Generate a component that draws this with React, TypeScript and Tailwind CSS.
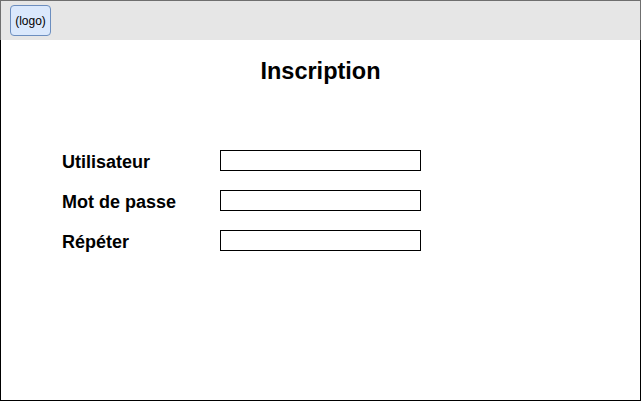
import React from "react";

export default function App() {
  const rows = ["Utilisateur", "Mot de passe", "Répéter"];
  return (
    <div
      className="w-[641px] h-[401px] flex flex-col bg-white"
      style={{ fontFamily: '"Liberation Sans", Arial, sans-serif' }}
    >
      <div className="h-[40px] shrink-0 bg-[#e6e6e6] border-t border-x border-[#6f6f6f] flex items-center pl-[9px]">
        <div className="w-[41px] h-[31px] bg-[#dae8fc] border border-[#6c8ebf] rounded-[4px] flex items-center justify-center text-[12px] text-black">
          (logo)
        </div>
      </div>
      <div className="flex-1 border-x border-b border-black flex flex-col">
        <div className="pt-[16px] h-[60px] text-center text-[23.5px] font-bold leading-[30px] text-black">
          Inscription
        </div>
        <div className="mt-[40px] flex flex-col pl-[61px]">
          {rows.map((r) => (
            <div key={r} className="h-[40px] flex items-center">
              <div className="w-[158px] text-[18px] font-bold text-black leading-[22px] pt-[4px]">
                {r}
              </div>
              <div className="w-[201px] h-[21px] border border-black bg-white" />
            </div>
          ))}
        </div>
      </div>
    </div>
  );
}
